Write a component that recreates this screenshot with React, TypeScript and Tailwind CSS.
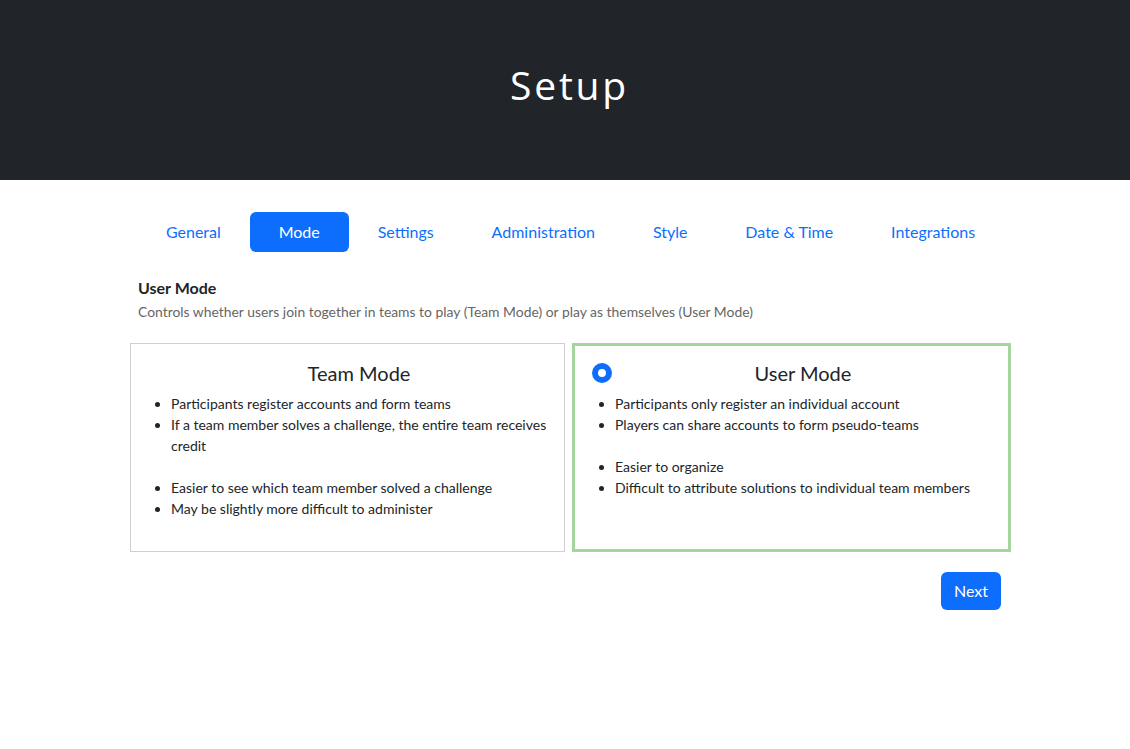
const tabs = ['General', 'Mode', 'Settings', 'Administration', 'Style', 'Date & Time', 'Integrations'];

function ModeCard({
  title,
  selected,
  first,
  second,
}: {
  title: string;
  selected: boolean;
  first: string[];
  second: string[];
}) {
  return (
    <div
      className={
        selected
          ? 'flex-1 border-[3px] border-[#a3d59d] bg-white pl-[15px] pr-[16px] pt-[15px] pb-[30px]'
          : 'flex-1 border border-[#d0d0d0] bg-white pl-[15px] pr-[16px] pt-[17px] pb-[32px]'
      }
    >
      <div className="flex items-center">
        <div className="w-[24px] shrink-0">
          {selected && (
            <div className="ml-[2px] h-[20px] w-[20px] rounded-full border-[6px] border-[#0d6efd] bg-white" />
          )}
        </div>
        <h3 className="flex-1 text-center text-[20px] leading-[24px] text-[#212529]">{title}</h3>
      </div>
      <ul className="mt-[8px] list-disc pl-[25px] text-[14px] leading-[21px] text-[#212529]">
        {first.map((t) => (
          <li key={t}>{t}</li>
        ))}
      </ul>
      <ul className="mt-[21px] list-disc pl-[25px] text-[14px] leading-[21px] text-[#212529]">
        {second.map((t) => (
          <li key={t}>{t}</li>
        ))}
      </ul>
    </div>
  );
}

export default function App() {
  return (
    <div className="min-h-screen bg-white" style={{ fontFamily: 'Lato, "Liberation Sans", sans-serif' }}>
      <div className="flex h-[180px] items-center justify-center bg-[#212529]">
        <h1
          className="pb-[10px] pl-[9px] text-[39px] font-normal tracking-[2.8px] text-white"
          style={{ fontFamily: '"Open Sans", Lato, sans-serif' }}
        >
          Setup
        </h1>
      </div>

      <div className="ml-[130px] w-[881px] pt-[32px]">
        <nav className="mx-[7px] flex">
          {tabs.map((t) => (
            <a
              key={t}
              className={
                t === 'Mode'
                  ? 'flex-auto rounded-[6px] bg-[#0d6efd] px-4 py-[8px] text-center text-[16px] leading-[24px] text-white'
                  : 'flex-auto px-4 py-[8px] text-center text-[16px] leading-[24px] text-[#0d6efd]'
              }
            >
              {t}
            </a>
          ))}
        </nav>

        <div className="mt-[25px] px-[8px]">
          <div className="text-[16px] font-bold leading-[22px] text-[#212529]">User Mode</div>
          <div className="mt-[3px] text-[13.9px] leading-[20px] text-[#666]">
            Controls whether users join together in teams to play (Team Mode) or play as themselves (User Mode)
          </div>
        </div>

        <div className="mt-[21px] flex items-stretch gap-[7px]">
          <ModeCard
            title="Team Mode"
            selected={false}
            first={[
              'Participants register accounts and form teams',
              'If a team member solves a challenge, the entire team receives credit',
            ]}
            second={['Easier to see which team member solved a challenge', 'May be slightly more difficult to administer']}
          />
          <ModeCard
            title="User Mode"
            selected
            first={['Participants only register an individual account', 'Players can share accounts to form pseudo-teams']}
            second={['Easier to organize', 'Difficult to attribute solutions to individual team members']}
          />
        </div>

        <div className="mt-[20px] flex justify-end pr-[10px]">
          <button className="h-[38px] w-[60px] rounded-[6px] bg-[#0d6efd] text-[16px] text-white">Next</button>
        </div>
      </div>
    </div>
  );
}
